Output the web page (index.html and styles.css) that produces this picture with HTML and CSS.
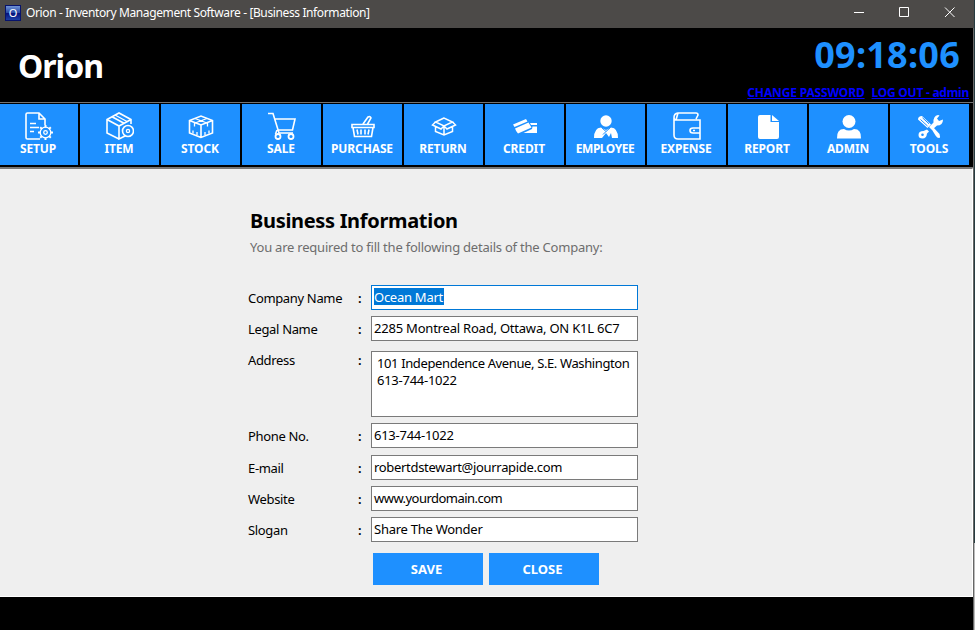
FILE: index.html
```
<!DOCTYPE html>
<html lang="en">
<head>
<meta charset="utf-8">
<title>Orion - Inventory Management Software</title>
<link rel="stylesheet" href="styles.css">
</head>
<body>
<div class="window">
  <div class="titlebar">
    <span class="app-icon">O</span>
    <span class="caption">Orion - Inventory Management Software - [Business Information]</span>
    <svg class="controls" width="120" height="28" viewBox="0 0 120 28" fill="none" stroke="#fff"><path d="M0 12.500h10M45.500 7.500h9v9h-9zM91 7.500l9.500 9.500M100.500 7.500l-9.500 9.500"/></svg>
  </div>
  <header class="header">
    <h1 class="brand">Orion</h1>
    <div class="session">
      <div class="clock">09:18:06</div>
      <div class="links"><a class="change">CHANGE PASSWORD</a><a class="logout">LOG OUT - admin</a></div>
    </div>
  </header>
  <nav class="toolbar">
    <div class="tile"><svg viewBox="0 0 28 28"><path stroke-width="1.600" d="M15 27H2.500Q1 27 1 25.500V2.500Q1 1 2.500 1H14l6 6v6M14 1v6h6M5 11.500h6M5 15.500h9M5 19.500h4"/><circle cx="20.500" cy="20.500" r="5.300"/><circle cx="20.500" cy="20.500" r="1.800"/><path stroke-width="2" d="M20.500 13v2.500M20.500 25.500V28M13 20.500h2.500M25.500 20.500H28M15.200 15.200l1.700 1.700M24.100 24.100l1.700 1.700M25.800 15.200l-1.700 1.700M16.900 24.100l-1.700 1.700"/></svg><span>SETUP</span></div>
    <div class="tile"><svg viewBox="0 0 28 28"><path stroke-width="1.600" d="M13 27L1 21V7.500L13 1l12 6.500V12M1 7.500L13 14l12-6.500M13 14v13l6-3M6 4.800L18 11.300"/><path d="M9 3l12 6.500"/><circle class="ring" cx="22" cy="19" r="5.500"/><circle cx="22" cy="19" r="1.600"/></svg><span>ITEM</span></div>
    <div class="tile"><svg viewBox="0 0 28 28"><path stroke-width="1.600" d="M14 25.500L2.500 21V8.500L14 4l11.500 4.500V21zM2.500 8.500L14 13l11.500-4.500M14 13v12.500"/><path d="M8 6.500l12 4.500M20 6.500L8 11M7.500 10.500v4M20.500 10.500v4M6 18.500v3M10 20v3M18 20v3M22 18.500v3"/></svg><span>STOCK</span></div>
    <div class="tile"><svg viewBox="0 0 28 28"><path stroke-width="1.600" d="M0 1.500h5L11 21h14M6.500 7H27l-2.500 11H10M9 18l-1.500 4"/><circle class="heavy" cx="10" cy="24.500" r="2.500"/><circle class="heavy" cx="23" cy="24.500" r="2.500"/></svg><span>SALE</span></div>
    <div class="tile"><svg viewBox="0 0 28 28"><path stroke-width="1.600" d="M3 12.500h22v3H3zM4 15.500l1.500 9h17l1.500-9M14 12l5-7q2.500-1 3 1l-4 7M8 17.500l1 5M12 17.500v5M16 17.500v5M20 17.500l-1 5"/></svg><span>PURCHASE</span></div>
    <div class="tile"><svg viewBox="0 0 28 28"><path stroke-width="1.500" d="M14 6L5.500 10 14 14l8.500-4zM5.500 10L2.500 13l8.500 4 3-3 3 3 8.500-4-3-3M5.500 15v4.500l8.500 3.500 8.500-3.500V15M14 14v9"/></svg><span>RETURN</span></div>
    <div class="tile"><svg viewBox="0 0 28 28"><path class="solid" d="M2 12.500L15 7l1.500 2.500L3.500 15zM4 16.500l13.500-6 3 5L7 21.500q-2-2-3-5zM19 11h7v2h-6zM21.500 14.500H26V21H12.500l8.500-4z"/></svg><span>CREDIT</span></div>
    <div class="tile"><svg viewBox="0 0 28 28"><circle class="solid" cx="14" cy="9" r="5.700"/><path class="solid" d="M2 26q0-10 7-10.500l5 2.500 5-2.500q7 .5 7 10.500h-6l-1-5-2 4-3-4-4 5z"/><path class="cut" d="M9.500 15.500l4.500 4 4.500-4M14 19.500l-3 3"/></svg><span>EMPLOYEE</span></div>
    <div class="tile"><svg viewBox="0 0 28 28"><path stroke-width="1.600" d="M1 6v17q0 4 4 4h22V8H3Q1 8 1 5.500 1 1.500 5 1h18q2 0 2 2l-2 4M5 1L3 8M27 16h-7q-3 0-3 2.500t3 2.500h7M20 18.500h2"/></svg><span>EXPENSE</span></div>
    <div class="tile"><svg viewBox="0 0 28 28"><path class="solid" d="M6 3h10.500v7H25v15q0 2-2 2H6q-2 0-2-2V5q0-2 2-2z"/><path class="solid" d="M18 3l7 6h-7z"/></svg><span>REPORT</span></div>
    <div class="tile"><svg viewBox="0 0 28 28"><circle class="solid" cx="14" cy="9.500" r="6.500"/><path class="solid" d="M2 26.500q-.5-9.500 7-9.500 5 3 10 0 7.500 0 7 9.500z"/></svg><span>ADMIN</span></div>
    <div class="tile"><svg viewBox="0 0 28 28"><path class="solid" d="M2 7.500Q2 4 6 4l9 8.500-3.500 3.500zM15.500 17l2-1.500 6 6.500q1 3 0 4-2 .5-4-2.500zM13 15l4.500-4.500Q17 4 22 3l1.500.5-2.500 3 2 2.500 4-1.500q0 6-6 6l-5 4.500zM11 17.500l2 2-2 2q-.500 5-4.500 5T2.500 23q0-4 5-4z"/><path class="cut" d="M4.500 7.500l7 6.500M6.500 5.800l6.500 6"/><circle class="hole" cx="6.500" cy="22.700" r="1.300"/></svg><span>TOOLS</span></div>
  </nav>
  <main class="panel">
    <h2 class="heading">Business Information</h2>
    <p class="intro">You are required to fill the following details of the Company:</p>
    <div class="form">
      <div class="row"><label>Company Name</label><i>:</i><div class="field focus"><mark>Ocean Mart</mark></div></div>
      <div class="row"><label>Legal Name</label><i>:</i><div class="field legal">2285 Montreal Road, Ottawa, ON K1L 6C7</div></div>
      <div class="row row-area"><label>Address</label><i>:</i><div class="field area"><span class="street">101 Independence Avenue, S.E. Washington</span><br>613-744-1022</div></div>
      <div class="row row-phone"><label>Phone No.</label><i>:</i><div class="field">613-744-1022</div></div>
      <div class="row"><label>E-mail</label><i>:</i><div class="field email">robertdstewart@jourrapide.com</div></div>
      <div class="row"><label>Website</label><i>:</i><div class="field website">www.yourdomain.com</div></div>
      <div class="row"><label>Slogan</label><i>:</i><div class="field">Share The Wonder</div></div>
    </div>
    <div class="actions"><button>SAVE</button><button>CLOSE</button></div>
  </main>
  <footer class="footer"></footer>
</div>
<div class="desktop"></div>
</body>
</html>
```
FILE: styles.css
```
* { box-sizing: border-box; }
body { margin: 0; width: 975px; height: 630px; display: flex; overflow: hidden; background: #000; font-family: "Noto Sans", "Open Sans", sans-serif; font-size: 13px; color: #000; }
.window { width: 974px; height: 630px; border-right: 1px solid #666; display: flex; flex-direction: column; }
.desktop { width: 1px; height: 543px; background: #263b40; box-shadow: 0 87px #bbb; }
.titlebar { height: 28px; background: #4c4a48; display: flex; align-items: center; padding: 0 0 3px 5px; flex: none; margin-right: -1px; }
.app-icon { width: 16px; height: 16px; border: 1px solid #07136b; background: linear-gradient(#6f92d4, #2447a4 50%, #06127b 52%, #1b3fa6); color: #fff; font-size: 11px; line-height: 14px; text-align: center; margin-right: 5px; }
.caption { color: #fff; font-size: 12px; line-height: 18px; white-space: nowrap; letter-spacing: -.38px; }
.controls { margin: 3px 0 0 auto; }
.header { height: 74px; flex: none; display: flex; justify-content: space-between; }
.brand { color: #fff; font-size: 32px; line-height: 40px; margin: 18px 0 0 18px; letter-spacing: -1px; }
.session { display: flex; flex-direction: column; align-items: flex-end; }
.clock { color: #1e90ff; font-size: 36px; line-height: 44px; font-weight: 700; margin: 5px 13px 0 0; letter-spacing: .25px; }
.links { display: flex; gap: 7px; margin: 8px 4px 0 0; font-size: 12px; line-height: 16px; font-weight: 700; color: #00f; white-space: nowrap; }
.links a { text-decoration: underline; }
.change { letter-spacing: -.15px; }
.logout { letter-spacing: -.25px; }
.toolbar { height: 66px; flex: none; display: grid; grid-template-columns: 78px repeat(11, 79px); gap: 2px; padding: 1px 0 2px; border-top: 1px solid #737373; border-bottom: 1px solid #777; }
.tile { background: #1e90ff; color: #fff; display: flex; flex-direction: column; align-items: center; height: 61px; padding-top: 8px; font-weight: 700; font-size: 12px; line-height: 16px; letter-spacing: -.12px; }
.tile:first-child { padding-right: 1px; }
.tile svg { width: 28px; height: 28px; fill: none; stroke: #fff; stroke-width: 1.3; flex: none; }
.tile svg .solid { fill: #fff; stroke: none; }
.tile svg .cut { fill: none; stroke: #1e90ff; stroke-width: 1; }
.tile svg .hole { fill: #1e90ff; stroke: none; }
.tile svg .ring { fill: #1e90ff; stroke-width: 1.6; }
.tile svg .heavy { stroke-width: 1.8; }
.tile span { white-space: nowrap; margin: 1px 1px 0 0; }
.tile:nth-child(8) span { letter-spacing: -.5px; }
.panel { height: 429px; flex: none; background: #efefef; border-top: 1px solid #777; border-right: 1px solid #fff; border-bottom: 1px solid #fff; padding-left: 248px; }
.heading { margin: 38px 0 0 2px; font-size: 20px; line-height: 28px; white-space: nowrap; letter-spacing: -.32px; }
.intro { margin: 3px 0 0 2px; color: #6d6d6d; line-height: 18px; white-space: nowrap; letter-spacing: -.22px; }
.form { margin-top: 29px; }
.row { display: flex; height: 25px; margin-bottom: 6px; }
.row label { width: 109px; line-height: 27px; white-space: nowrap; letter-spacing: -.34px; }
.row i { width: 14px; padding-left: 1px; font-style: normal; font-weight: 600; line-height: 27px; }
.field { width: 267px; height: 25px; background: #fff; border: 1px solid #7a7a7a; padding-left: 2px; line-height: 22px; white-space: nowrap; letter-spacing: -.26px; }
.focus { border-color: #0078d7; }
mark { background: #0078d7; color: #fff; display: inline-block; height: 17px; line-height: 18px; padding: 0 1px 0 0; vertical-align: top; margin-top: 2px; }
.legal { letter-spacing: -.21px; }
.street { letter-spacing: -.38px; }
.email { letter-spacing: -.31px; }
.website { letter-spacing: -.53px; }
.row-area { height: 66px; margin-top: 10px; }
.row-area label, .row-area i { line-height: 18px; }
.area { height: 66px; line-height: 17px; padding: 3px 0 0 5px; }
.row-phone { margin-bottom: 7px; }
.actions { display: flex; gap: 6px; margin: 11px 0 0 125px; }
button { width: 110px; height: 32px; border: 0; background: #1e90ff; color: #fff; font: 700 13px/18px "Noto Sans", sans-serif; padding: 0 3px 0 0; }
.footer { flex: 1; }
```
